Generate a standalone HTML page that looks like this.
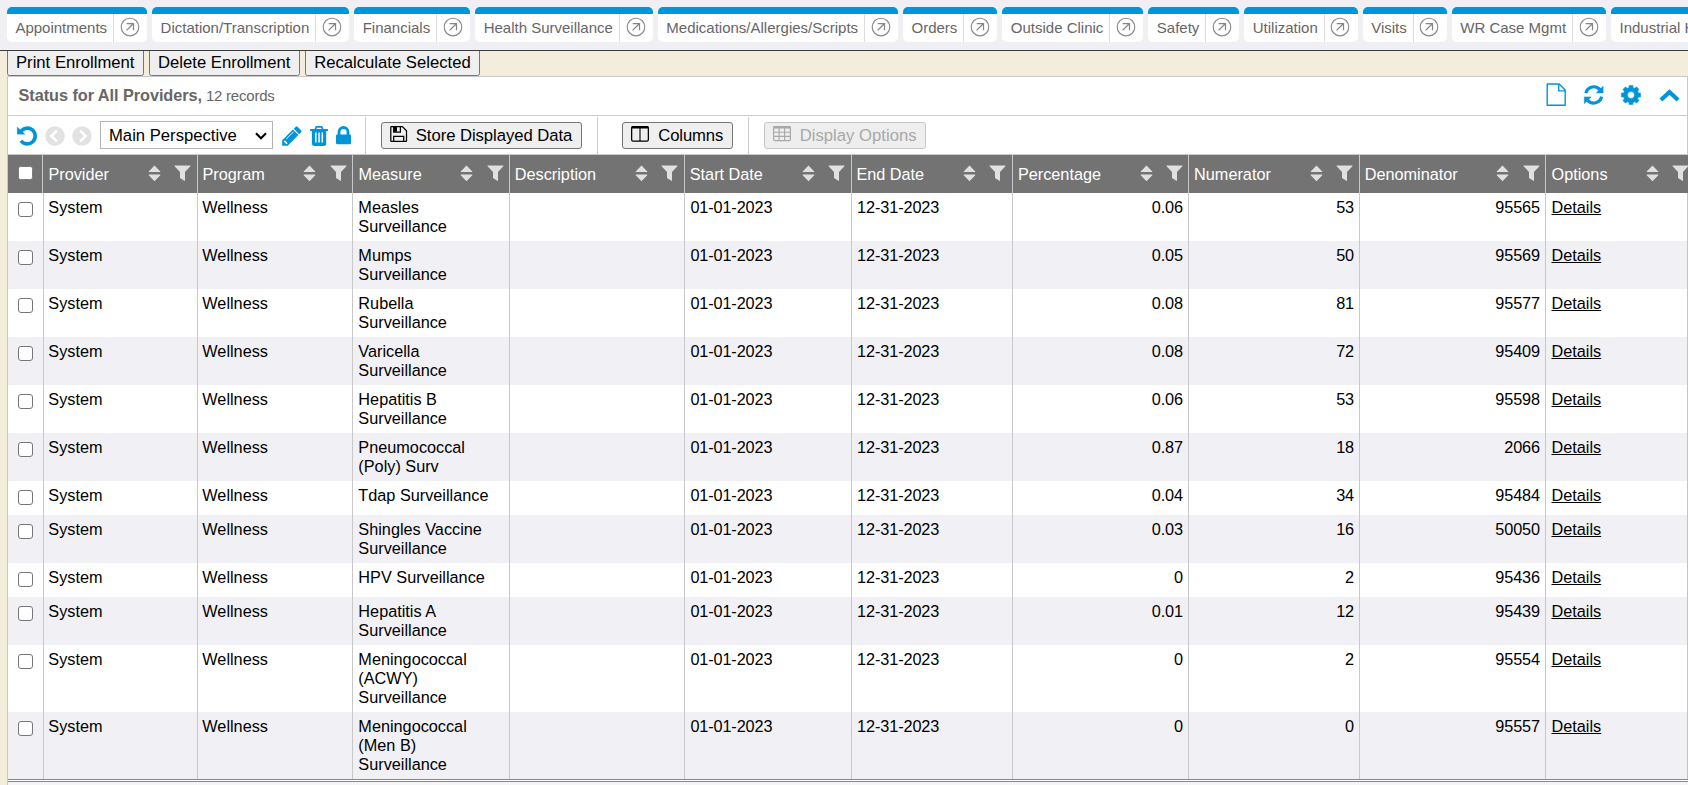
<!DOCTYPE html><html lang="en"><head><meta charset="utf-8"><title>Health Surveillance</title><style>
*{box-sizing:border-box}
html,body{margin:0;padding:0}
body{width:1688px;height:785px;overflow:hidden;background:#f5eddc;font-family:"Liberation Sans",Arial,sans-serif;font-size:16.25px;color:#000;position:relative}
svg{display:block;overflow:visible}
#tabs{z-index:2;position:absolute;left:0;top:0;width:1688px;height:51px;background:#efeff4;border-bottom:1px solid #3c3c3c;overflow:hidden;display:flex;gap:5.06px;padding:7px 0 0 7px;flex-wrap:nowrap}
.tab{flex:none;position:relative;height:35px;background:#fff;border-top:7px solid #0095da;border-radius:5px;font-size:15px;color:#666;white-space:nowrap;padding:0 40px 0 8.4px;line-height:27px}
.tab .sep{position:absolute;right:33px;top:0;width:1px;height:28px;background:#ddd}
.tab .go{position:absolute;right:7.4px;top:3.45px}
#btnbar{position:absolute;left:0;top:51px;width:1688px;height:26px;background:#f5eddc}
.btn{position:absolute;display:block;margin:0;border:1px solid #767676;border-radius:3px;background:#efefef;font-family:inherit;font-size:16.67px;color:#000;white-space:nowrap;padding:0;text-align:left}
.btn span{position:absolute;white-space:nowrap}
.btn svg{position:absolute}
.btn.dis{border-color:#c6c6c6;color:#a8a8a8;background:#eeeeee}
#panel{position:absolute;left:7px;top:76px;width:1681px;height:709px;background:#fff;border-left:1px solid #c8c8c8;border-top:1px solid #c8c8c8;border-right:1px solid #c8c8c8}
#title{position:absolute;left:0;top:0;width:100%;height:39px;border-bottom:1px solid #ccc}
#title .h{position:absolute;left:10.5px;letter-spacing:-0.04px;top:8px;font-weight:bold;color:#666;font-size:16.25px;line-height:20px;white-space:nowrap}
#title .h span{font-weight:normal;font-size:15px;letter-spacing:-0.22px;margin-left:-0.6px}
.ic{position:absolute}
.vsep{position:absolute;top:117px;width:1px;height:38px;background:#ccc}
#sel{-webkit-appearance:none;appearance:none;margin:0;outline:0;font-family:inherit;color:#000;position:absolute;left:100px;top:121px;width:173px;height:28px;border:1px solid #b4b4b4;border-radius:0;background:#fff;font-size:16.67px;line-height:26px;padding:1.1px 0 0 8px;white-space:nowrap}
#sel svg{position:absolute;right:4.9px;top:10.2px}
#hline{position:absolute;left:8px;top:154px;width:1680px;height:1px;background:#c8c8c8}
table{position:absolute;left:8px;top:155px;border-collapse:separate;border-spacing:0;table-layout:fixed;width:1688px}
th{height:38px;background:#737373;color:#fff;font-weight:normal;text-align:left;padding:0 0 0 4.4px;line-height:19px;border-left:1px solid #c8c8c8;position:relative;white-space:nowrap;font-size:16.25px}
td{vertical-align:top;padding:5px 5px 0 4.3px;line-height:19px;border-left:1px solid #c8c8c8;font-size:16.25px;white-space:nowrap}
td.n{text-align:right;letter-spacing:-0.1px}
td.m{padding-left:5.37px}
td.d1{padding-left:5.4px;letter-spacing:-0.12px}
td.d2{padding-left:5.1px;letter-spacing:-0.1px}
td.op{padding-left:5.5px}
td.c,th.c{padding:0;border-left:0}
tr.e td{background:#f0f0f5}
tr.o td{background:#fff}
.sort{position:absolute;right:36px;top:10px}
.filt{position:absolute;right:6px;top:9.8px}
a{color:#000;text-decoration:underline}
.cb{-webkit-appearance:none;appearance:none;margin:0;padding:0;display:block;position:absolute;width:15px;height:15px;border:1.5px solid #767676;border-radius:3px;background:#fff}
#foot{position:absolute;left:8px;top:779px;width:1680px;height:6px;background:#f5f5f7;border-top:1px solid #888}
#foot:before{content:"";position:absolute;left:0;top:0;width:100%;height:1px;background:#fff;border-bottom:1px solid #888}
#redge{position:absolute;left:1687px;top:193px;width:1px;height:586px;background:#c4c4c4;z-index:3}
</style></head><body>
<div id="tabs">
<div class="tab">Appointments<span class="sep"></span><svg class="go" width="20" height="20" viewBox="0 0 20 20"><circle cx="10" cy="10" r="8.8" fill="none" stroke="#8a8a8a" stroke-width="1.15"/><path d="M6.6 13.4 L13.5 6.5 M6.7 6.5 H13.5 V13.3" fill="none" stroke="#858585" stroke-width="1.25"/></svg></div>
<div class="tab">Dictation/Transcription<span class="sep"></span><svg class="go" width="20" height="20" viewBox="0 0 20 20"><circle cx="10" cy="10" r="8.8" fill="none" stroke="#8a8a8a" stroke-width="1.15"/><path d="M6.6 13.4 L13.5 6.5 M6.7 6.5 H13.5 V13.3" fill="none" stroke="#858585" stroke-width="1.25"/></svg></div>
<div class="tab">Financials<span class="sep"></span><svg class="go" width="20" height="20" viewBox="0 0 20 20"><circle cx="10" cy="10" r="8.8" fill="none" stroke="#8a8a8a" stroke-width="1.15"/><path d="M6.6 13.4 L13.5 6.5 M6.7 6.5 H13.5 V13.3" fill="none" stroke="#858585" stroke-width="1.25"/></svg></div>
<div class="tab">Health Surveillance<span class="sep"></span><svg class="go" width="20" height="20" viewBox="0 0 20 20"><circle cx="10" cy="10" r="8.8" fill="none" stroke="#8a8a8a" stroke-width="1.15"/><path d="M6.6 13.4 L13.5 6.5 M6.7 6.5 H13.5 V13.3" fill="none" stroke="#858585" stroke-width="1.25"/></svg></div>
<div class="tab">Medications/Allergies/Scripts<span class="sep"></span><svg class="go" width="20" height="20" viewBox="0 0 20 20"><circle cx="10" cy="10" r="8.8" fill="none" stroke="#8a8a8a" stroke-width="1.15"/><path d="M6.6 13.4 L13.5 6.5 M6.7 6.5 H13.5 V13.3" fill="none" stroke="#858585" stroke-width="1.25"/></svg></div>
<div class="tab">Orders<span class="sep"></span><svg class="go" width="20" height="20" viewBox="0 0 20 20"><circle cx="10" cy="10" r="8.8" fill="none" stroke="#8a8a8a" stroke-width="1.15"/><path d="M6.6 13.4 L13.5 6.5 M6.7 6.5 H13.5 V13.3" fill="none" stroke="#858585" stroke-width="1.25"/></svg></div>
<div class="tab">Outside Clinic<span class="sep"></span><svg class="go" width="20" height="20" viewBox="0 0 20 20"><circle cx="10" cy="10" r="8.8" fill="none" stroke="#8a8a8a" stroke-width="1.15"/><path d="M6.6 13.4 L13.5 6.5 M6.7 6.5 H13.5 V13.3" fill="none" stroke="#858585" stroke-width="1.25"/></svg></div>
<div class="tab">Safety<span class="sep"></span><svg class="go" width="20" height="20" viewBox="0 0 20 20"><circle cx="10" cy="10" r="8.8" fill="none" stroke="#8a8a8a" stroke-width="1.15"/><path d="M6.6 13.4 L13.5 6.5 M6.7 6.5 H13.5 V13.3" fill="none" stroke="#858585" stroke-width="1.25"/></svg></div>
<div class="tab">Utilization<span class="sep"></span><svg class="go" width="20" height="20" viewBox="0 0 20 20"><circle cx="10" cy="10" r="8.8" fill="none" stroke="#8a8a8a" stroke-width="1.15"/><path d="M6.6 13.4 L13.5 6.5 M6.7 6.5 H13.5 V13.3" fill="none" stroke="#858585" stroke-width="1.25"/></svg></div>
<div class="tab">Visits<span class="sep"></span><svg class="go" width="20" height="20" viewBox="0 0 20 20"><circle cx="10" cy="10" r="8.8" fill="none" stroke="#8a8a8a" stroke-width="1.15"/><path d="M6.6 13.4 L13.5 6.5 M6.7 6.5 H13.5 V13.3" fill="none" stroke="#858585" stroke-width="1.25"/></svg></div>
<div class="tab">WR Case Mgmt<span class="sep"></span><svg class="go" width="20" height="20" viewBox="0 0 20 20"><circle cx="10" cy="10" r="8.8" fill="none" stroke="#8a8a8a" stroke-width="1.15"/><path d="M6.6 13.4 L13.5 6.5 M6.7 6.5 H13.5 V13.3" fill="none" stroke="#858585" stroke-width="1.25"/></svg></div>
<div class="tab">Industrial Hygiene<span class="sep"></span><svg class="go" width="20" height="20" viewBox="0 0 20 20"><circle cx="10" cy="10" r="8.8" fill="none" stroke="#8a8a8a" stroke-width="1.15"/><path d="M6.6 13.4 L13.5 6.5 M6.7 6.5 H13.5 V13.3" fill="none" stroke="#858585" stroke-width="1.25"/></svg></div>
</div>
<div id="btnbar">
<button class="btn" style="left:7px;top:-4px;width:137px;height:29px;border-radius:2.5px"><span style="left:8px;top:3.8px;line-height:21px">Print Enrollment</span></button>
<button class="btn" style="left:149px;top:-4px;width:151px;height:29px;border-radius:2.5px"><span style="left:8px;top:3.8px;line-height:21px">Delete Enrollment</span></button>
<button class="btn" style="left:305px;top:-4px;width:175px;height:29px;border-radius:2.5px"><span style="left:8.2px;top:3.8px;line-height:21px">Recalculate Selected</span></button>
</div>
<div id="panel"><div id="title"><div class="h">Status for All Providers, <span>12 records</span></div></div></div>
<div class="ic" style="left:1546px;top:83px"><svg width="21" height="24" viewBox="0 0 21 24"><path d="M1.2 1 H13.1 L19.2 7.1 V22.2 H1.2 Z" fill="none" stroke="#0095da" stroke-width="1.4" stroke-linejoin="round"/><path d="M12.7 1.2 V7.9 H19" fill="none" stroke="#0095da" stroke-width="1.4"/></svg></div>
<div class="ic" style="left:1583.5px;top:84.9px"><svg width="20" height="20" viewBox="0 0 20 20"><path d="M1.86 8.08 A8.1 8.1 0 0 1 16.13 4.91" fill="none" stroke="#0095da" stroke-width="3.2"/><path d="M17.64 11.72 A8.1 8.1 0 0 1 3.37 14.89" fill="none" stroke="#0095da" stroke-width="3.2"/><path d="M19.1 1.2 V7.9 H12.2 Z M0.3 18.6 V11.9 H7.2 Z" fill="#0095da" stroke="#0095da" stroke-width="0.5" stroke-linejoin="round"/></svg></div>
<div class="ic" style="left:1621.1px;top:84.9px"><svg width="20" height="20" viewBox="0 0 20 20"><path d="M8.07 2.55 L8.05 0.40 L11.95 0.40 L11.93 2.55 L13.91 3.37 L15.41 1.83 L18.17 4.59 L16.63 6.09 L17.45 8.07 L19.60 8.05 L19.60 11.95 L17.45 11.93 L16.63 13.91 L18.17 15.41 L15.41 18.17 L13.91 16.63 L11.93 17.45 L11.95 19.60 L8.05 19.60 L8.07 17.45 L6.09 16.63 L4.59 18.17 L1.83 15.41 L3.37 13.91 L2.55 11.93 L0.40 11.95 L0.40 8.05 L2.55 8.07 L3.37 6.09 L1.83 4.59 L4.59 1.83 L6.09 3.37 Z M13.4 10 A3.4 3.4 0 1 0 6.6 10 A3.4 3.4 0 1 0 13.4 10 Z" fill="#0095da" fill-rule="evenodd" stroke="#0095da" stroke-width="0.5" stroke-linejoin="round"/></svg></div>
<div class="ic" style="left:1658.7px;top:88.6px"><svg width="21" height="13" viewBox="0 0 21 13"><path d="M1.9 11.1 L10.5 2.95 L19.1 11.1" fill="none" stroke="#0095da" stroke-width="4.1"/></svg></div>
<div class="ic" style="left:17.4px;top:125.9px"><svg width="20" height="20" viewBox="0 0 20 20"><path d="M3.67 5.70 A7.9 7.9 0 1 1 3.99 14.75" fill="none" stroke="#0095da" stroke-width="3.6"/><path d="M0.4 1.3 L0.4 8.1 L7.6 8.1 Z" fill="#0095da" stroke="#0095da" stroke-width="0.7" stroke-linejoin="round"/></svg></div>
<div class="ic" style="left:44.7px;top:125.9px"><svg width="20" height="20" viewBox="0 0 20 20"><circle cx="10" cy="10" r="9.75" fill="#e2e2e2"/><path d="M11.9 4.6 L6.4 10 L11.9 15.4" fill="none" stroke="#fff" stroke-width="2.6"/></svg></div>
<div class="ic" style="left:72.4px;top:125.9px"><svg width="20" height="20" viewBox="0 0 20 20"><circle cx="10" cy="10" r="9.75" fill="#e2e2e2"/><path d="M8.1 4.6 L13.6 10 L8.1 15.4" fill="none" stroke="#fff" stroke-width="2.6"/></svg></div>
<select id="sel"><option>Main Perspective</option></select><div class="ic" style="left:255.1px;top:132.2px"><svg width="12" height="8" viewBox="0 0 12 8"><path d="M1 1.2 L6 6.3 L11 1.2" fill="none" stroke="#000" stroke-width="2.1"/></svg></div>
<div class="ic" style="left:281.8px;top:125.9px"><svg width="20" height="20" viewBox="0 0 20 20"><path d="M0.2 14.3 L10.9 3.6 L16.4 9.1 L5.7 19.8 H0.2 Z" fill="#0095da"/><path d="M11.75 2.75 L13.85 0.65 Q14.65 -0.05 15.45 0.65 L19.25 4.45 Q19.95 5.25 19.25 6.05 L17.15 8.15 Z" fill="#0095da"/><path d="M4.3 13 L11.4 5.9" stroke="#fff" stroke-width="0.9" fill="none"/><path d="M2.3 14.9 L5.1 17.7" stroke="#fff" stroke-width="1.6" fill="none"/></svg></div>
<div class="ic" style="left:309.85px;top:125.9px"><svg width="18" height="20" viewBox="0 0 18 20"><path d="M5 4 L6.3 0.9 H11.7 L13 4" fill="none" stroke="#0095da" stroke-width="1.7" stroke-linejoin="round"/><rect x="0" y="3.1" width="18" height="1.9" rx="0.5" fill="#0095da"/><path d="M1.9 4.8 H16.2 V17.8 Q16.2 19.9 14.2 19.9 H3.9 Q1.9 19.9 1.9 17.8 Z" fill="#0095da"/><path d="M5.8 6.6 V16.6 M9.05 6.6 V16.6 M12.3 6.6 V16.6" stroke="#fff" stroke-width="1.5" fill="none"/></svg></div>
<div class="ic" style="left:335.9px;top:125.7px"><svg width="15" height="19" viewBox="0 0 15 19"><rect x="0" y="8.4" width="15" height="9.8" rx="1.1" fill="#0095da"/><path d="M3 9 V6 A4.5 4.5 0 0 1 12 6 V9" fill="none" stroke="#0095da" stroke-width="2.8"/></svg></div>
<div class="vsep" style="left:365px"></div>
<div class="vsep" style="left:597px"></div>
<div class="vsep" style="left:748px"></div>
<button class="btn " style="left:381px;top:122px;width:201px;height:27px"><span style="left:33.80px;top:2px;line-height:21px;letter-spacing:-0.05px">Store Displayed Data</span><div class="ic" style="left:8.199999999999989px;top:3.2px"><svg width="17" height="17" viewBox="0 0 17 17"><path d="M0.8 1.2 Q0.8 0.6 1.4 0.6 H12.4 L16.5 4.7 V14.8 Q16.5 15.4 15.9 15.4 H1.4 Q0.8 15.4 0.8 14.8 Z" fill="none" stroke="#000" stroke-width="1.25"/><path d="M3.7 0.6 V6.1 H10.4 V0.6" fill="none" stroke="#000" stroke-width="1.2"/><rect x="3.7" y="0.6" width="3.3" height="5.2" fill="#000"/><path d="M3.7 15.4 V10.3 H13.7 V15.4" fill="none" stroke="#000" stroke-width="1.25"/></svg></div></button>
<button class="btn " style="left:622px;top:122px;width:111px;height:27px"><span style="left:35.30px;top:2px;line-height:21px;letter-spacing:-0.13px">Columns</span><div class="ic" style="left:8px;top:3.2px"><svg width="18" height="17" viewBox="0 0 18 17"><rect x="0.65" y="0.65" width="16.7" height="14.5" rx="1.3" fill="none" stroke="#000" stroke-width="1.25"/><rect x="0.6" y="0.3" width="16.8" height="2.3" rx="0.8" fill="#000"/><path d="M9 1 V15.3" stroke="#000" stroke-width="1.1"/></svg></div></button>
<button class="btn dis" style="left:764px;top:122px;width:162px;height:27px"><span style="left:34.70px;top:2px;line-height:21px;letter-spacing:0.02px">Display Options</span><div class="ic" style="left:8.100000000000023px;top:3.2px"><svg width="18" height="16" viewBox="0 0 18 16"><rect x="0.6" y="0.6" width="16.8" height="14" rx="1.3" fill="none" stroke="#a8a8a8" stroke-width="1.2"/><rect x="0.3" y="0.2" width="17.4" height="2.3" rx="0.8" fill="#a8a8a8"/><path d="M6.1 2 V15 M11.6 2 V15 M0.6 6.3 H17.4 M0.6 10.4 H17.4" stroke="#a8a8a8" stroke-width="1.1" fill="none"/></svg></div></button>
<table><colgroup>
<col style="width:35px">
<col style="width:154px">
<col style="width:155px">
<col style="width:157px">
<col style="width:175px">
<col style="width:167px">
<col style="width:161px">
<col style="width:176px">
<col style="width:171px">
<col style="width:186px">
<col style="width:151px">
</colgroup><thead><tr>
<th class="c"><input type="checkbox" class="cb" style="left:10px;top:10.6px;height:14.3px;border-radius:2.5px;border-color:#7d7d7d"><span style="position:absolute;right:0;top:0;width:1px;height:38px;background:#c8c8c8"></span></th>
<th style="padding-left:4.40px;border-left-color:#737373">Provider<div class="sort" style="right:36.45px"><svg width="13" height="17" viewBox="0 0 13 17"><path d="M6.5 0.5 L12.3 6.5 Q12.6 7.1 12 7.1 H1 Q0.4 7.1 0.7 6.5 Z M6.5 16.2 L0.7 10.3 Q0.4 9.5 1 9.5 H12 Q12.6 9.5 12.3 10.3 Z" fill="#e0e0e0"/></svg></div><div class="filt" style="right:6.30px"><svg width="17" height="17" viewBox="0 0 17 17"><path d="M0.8 0.4 H16.2 Q16.8 0.6 16.4 1.2 L11 6.9 V15.6 Q10.8 16.1 10.3 15.8 L6 12.9 V6.9 L0.6 1.2 Q0.2 0.6 0.8 0.4 Z" fill="#e0e0e0"/></svg></div></th>
<th style="padding-left:4.40px">Program<div class="sort" style="right:35.70px"><svg width="13" height="17" viewBox="0 0 13 17"><path d="M6.5 0.5 L12.3 6.5 Q12.6 7.1 12 7.1 H1 Q0.4 7.1 0.7 6.5 Z M6.5 16.2 L0.7 10.3 Q0.4 9.5 1 9.5 H12 Q12.6 9.5 12.3 10.3 Z" fill="#e0e0e0"/></svg></div><div class="filt" style="right:5.30px"><svg width="17" height="17" viewBox="0 0 17 17"><path d="M0.8 0.4 H16.2 Q16.8 0.6 16.4 1.2 L11 6.9 V15.6 Q10.8 16.1 10.3 15.8 L6 12.9 V6.9 L0.6 1.2 Q0.2 0.6 0.8 0.4 Z" fill="#e0e0e0"/></svg></div></th>
<th style="padding-left:5.47px">Measure<div class="sort" style="right:35.85px"><svg width="13" height="17" viewBox="0 0 13 17"><path d="M6.5 0.5 L12.3 6.5 Q12.6 7.1 12 7.1 H1 Q0.4 7.1 0.7 6.5 Z M6.5 16.2 L0.7 10.3 Q0.4 9.5 1 9.5 H12 Q12.6 9.5 12.3 10.3 Z" fill="#e0e0e0"/></svg></div><div class="filt" style="right:5.50px"><svg width="17" height="17" viewBox="0 0 17 17"><path d="M0.8 0.4 H16.2 Q16.8 0.6 16.4 1.2 L11 6.9 V15.6 Q10.8 16.1 10.3 15.8 L6 12.9 V6.9 L0.6 1.2 Q0.2 0.6 0.8 0.4 Z" fill="#e0e0e0"/></svg></div></th>
<th style="padding-left:4.83px">Description<div class="sort" style="right:35.95px"><svg width="13" height="17" viewBox="0 0 13 17"><path d="M6.5 0.5 L12.3 6.5 Q12.6 7.1 12 7.1 H1 Q0.4 7.1 0.7 6.5 Z M6.5 16.2 L0.7 10.3 Q0.4 9.5 1 9.5 H12 Q12.6 9.5 12.3 10.3 Z" fill="#e0e0e0"/></svg></div><div class="filt" style="right:5.80px"><svg width="17" height="17" viewBox="0 0 17 17"><path d="M0.8 0.4 H16.2 Q16.8 0.6 16.4 1.2 L11 6.9 V15.6 Q10.8 16.1 10.3 15.8 L6 12.9 V6.9 L0.6 1.2 Q0.2 0.6 0.8 0.4 Z" fill="#e0e0e0"/></svg></div></th>
<th style="padding-left:4.75px">Start Date<div class="sort" style="right:36.45px"><svg width="13" height="17" viewBox="0 0 13 17"><path d="M6.5 0.5 L12.3 6.5 Q12.6 7.1 12 7.1 H1 Q0.4 7.1 0.7 6.5 Z M6.5 16.2 L0.7 10.3 Q0.4 9.5 1 9.5 H12 Q12.6 9.5 12.3 10.3 Z" fill="#e0e0e0"/></svg></div><div class="filt" style="right:5.90px"><svg width="17" height="17" viewBox="0 0 17 17"><path d="M0.8 0.4 H16.2 Q16.8 0.6 16.4 1.2 L11 6.9 V15.6 Q10.8 16.1 10.3 15.8 L6 12.9 V6.9 L0.6 1.2 Q0.2 0.6 0.8 0.4 Z" fill="#e0e0e0"/></svg></div></th>
<th style="padding-left:4.40px">End Date<div class="sort" style="right:35.95px"><svg width="13" height="17" viewBox="0 0 13 17"><path d="M6.5 0.5 L12.3 6.5 Q12.6 7.1 12 7.1 H1 Q0.4 7.1 0.7 6.5 Z M6.5 16.2 L0.7 10.3 Q0.4 9.5 1 9.5 H12 Q12.6 9.5 12.3 10.3 Z" fill="#e0e0e0"/></svg></div><div class="filt" style="right:5.80px"><svg width="17" height="17" viewBox="0 0 17 17"><path d="M0.8 0.4 H16.2 Q16.8 0.6 16.4 1.2 L11 6.9 V15.6 Q10.8 16.1 10.3 15.8 L6 12.9 V6.9 L0.6 1.2 Q0.2 0.6 0.8 0.4 Z" fill="#e0e0e0"/></svg></div></th>
<th style="padding-left:4.90px">Percentage<div class="sort" style="right:35.45px"><svg width="13" height="17" viewBox="0 0 13 17"><path d="M6.5 0.5 L12.3 6.5 Q12.6 7.1 12 7.1 H1 Q0.4 7.1 0.7 6.5 Z M6.5 16.2 L0.7 10.3 Q0.4 9.5 1 9.5 H12 Q12.6 9.5 12.3 10.3 Z" fill="#e0e0e0"/></svg></div><div class="filt" style="right:5.20px"><svg width="17" height="17" viewBox="0 0 17 17"><path d="M0.8 0.4 H16.2 Q16.8 0.6 16.4 1.2 L11 6.9 V15.6 Q10.8 16.1 10.3 15.8 L6 12.9 V6.9 L0.6 1.2 Q0.2 0.6 0.8 0.4 Z" fill="#e0e0e0"/></svg></div></th>
<th style="padding-left:5.10px">Numerator<div class="sort" style="right:35.95px"><svg width="13" height="17" viewBox="0 0 13 17"><path d="M6.5 0.5 L12.3 6.5 Q12.6 7.1 12 7.1 H1 Q0.4 7.1 0.7 6.5 Z M6.5 16.2 L0.7 10.3 Q0.4 9.5 1 9.5 H12 Q12.6 9.5 12.3 10.3 Z" fill="#e0e0e0"/></svg></div><div class="filt" style="right:5.80px"><svg width="17" height="17" viewBox="0 0 17 17"><path d="M0.8 0.4 H16.2 Q16.8 0.6 16.4 1.2 L11 6.9 V15.6 Q10.8 16.1 10.3 15.8 L6 12.9 V6.9 L0.6 1.2 Q0.2 0.6 0.8 0.4 Z" fill="#e0e0e0"/></svg></div></th>
<th style="padding-left:4.70px">Denominator<div class="sort" style="right:35.70px"><svg width="13" height="17" viewBox="0 0 13 17"><path d="M6.5 0.5 L12.3 6.5 Q12.6 7.1 12 7.1 H1 Q0.4 7.1 0.7 6.5 Z M6.5 16.2 L0.7 10.3 Q0.4 9.5 1 9.5 H12 Q12.6 9.5 12.3 10.3 Z" fill="#e0e0e0"/></svg></div><div class="filt" style="right:5.30px"><svg width="17" height="17" viewBox="0 0 17 17"><path d="M0.8 0.4 H16.2 Q16.8 0.6 16.4 1.2 L11 6.9 V15.6 Q10.8 16.1 10.3 15.8 L6 12.9 V6.9 L0.6 1.2 Q0.2 0.6 0.8 0.4 Z" fill="#e0e0e0"/></svg></div></th>
<th style="padding-left:5.50px">Options<div class="sort" style="right:36.85px"><svg width="13" height="17" viewBox="0 0 13 17"><path d="M6.5 0.5 L12.3 6.5 Q12.6 7.1 12 7.1 H1 Q0.4 7.1 0.7 6.5 Z M6.5 16.2 L0.7 10.3 Q0.4 9.5 1 9.5 H12 Q12.6 9.5 12.3 10.3 Z" fill="#e0e0e0"/></svg></div><div class="filt" style="right:6.90px"><svg width="17" height="17" viewBox="0 0 17 17"><path d="M0.8 0.4 H16.2 Q16.8 0.6 16.4 1.2 L11 6.9 V15.6 Q10.8 16.1 10.3 15.8 L6 12.9 V6.9 L0.6 1.2 Q0.2 0.6 0.8 0.4 Z" fill="#e0e0e0"/></svg></div></th>
</tr></thead><tbody>
<tr class="o" style="height:48px"><td class="c" style="position:relative"><input type="checkbox" class="cb" style="left:10px;top:9px"></td><td>System</td><td>Wellness</td><td class="m">Measles<br>Surveillance</td><td></td><td class="d1">01-01-2023</td><td class="d2">12-31-2023</td><td class="n">0.06</td><td class="n">53</td><td class="n">95565</td><td class="op"><a>Details</a></td></tr>
<tr class="e" style="height:48px"><td class="c" style="position:relative"><input type="checkbox" class="cb" style="left:10px;top:9px"></td><td>System</td><td>Wellness</td><td class="m">Mumps<br>Surveillance</td><td></td><td class="d1">01-01-2023</td><td class="d2">12-31-2023</td><td class="n">0.05</td><td class="n">50</td><td class="n">95569</td><td class="op"><a>Details</a></td></tr>
<tr class="o" style="height:48px"><td class="c" style="position:relative"><input type="checkbox" class="cb" style="left:10px;top:9px"></td><td>System</td><td>Wellness</td><td class="m">Rubella<br>Surveillance</td><td></td><td class="d1">01-01-2023</td><td class="d2">12-31-2023</td><td class="n">0.08</td><td class="n">81</td><td class="n">95577</td><td class="op"><a>Details</a></td></tr>
<tr class="e" style="height:48px"><td class="c" style="position:relative"><input type="checkbox" class="cb" style="left:10px;top:9px"></td><td>System</td><td>Wellness</td><td class="m">Varicella<br>Surveillance</td><td></td><td class="d1">01-01-2023</td><td class="d2">12-31-2023</td><td class="n">0.08</td><td class="n">72</td><td class="n">95409</td><td class="op"><a>Details</a></td></tr>
<tr class="o" style="height:48px"><td class="c" style="position:relative"><input type="checkbox" class="cb" style="left:10px;top:9px"></td><td>System</td><td>Wellness</td><td class="m">Hepatitis B<br>Surveillance</td><td></td><td class="d1">01-01-2023</td><td class="d2">12-31-2023</td><td class="n">0.06</td><td class="n">53</td><td class="n">95598</td><td class="op"><a>Details</a></td></tr>
<tr class="e" style="height:48px"><td class="c" style="position:relative"><input type="checkbox" class="cb" style="left:10px;top:9px"></td><td>System</td><td>Wellness</td><td class="m">Pneumococcal<br>(Poly) Surv</td><td></td><td class="d1">01-01-2023</td><td class="d2">12-31-2023</td><td class="n">0.87</td><td class="n">18</td><td class="n">2066</td><td class="op"><a>Details</a></td></tr>
<tr class="o" style="height:34px"><td class="c" style="position:relative"><input type="checkbox" class="cb" style="left:10px;top:9px"></td><td>System</td><td>Wellness</td><td class="m">Tdap Surveillance</td><td></td><td class="d1">01-01-2023</td><td class="d2">12-31-2023</td><td class="n">0.04</td><td class="n">34</td><td class="n">95484</td><td class="op"><a>Details</a></td></tr>
<tr class="e" style="height:48px"><td class="c" style="position:relative"><input type="checkbox" class="cb" style="left:10px;top:9px"></td><td>System</td><td>Wellness</td><td class="m">Shingles Vaccine<br>Surveillance</td><td></td><td class="d1">01-01-2023</td><td class="d2">12-31-2023</td><td class="n">0.03</td><td class="n">16</td><td class="n">50050</td><td class="op"><a>Details</a></td></tr>
<tr class="o" style="height:34px"><td class="c" style="position:relative"><input type="checkbox" class="cb" style="left:10px;top:9px"></td><td>System</td><td>Wellness</td><td class="m">HPV Surveillance</td><td></td><td class="d1">01-01-2023</td><td class="d2">12-31-2023</td><td class="n">0</td><td class="n">2</td><td class="n">95436</td><td class="op"><a>Details</a></td></tr>
<tr class="e" style="height:48px"><td class="c" style="position:relative"><input type="checkbox" class="cb" style="left:10px;top:9px"></td><td>System</td><td>Wellness</td><td class="m">Hepatitis A<br>Surveillance</td><td></td><td class="d1">01-01-2023</td><td class="d2">12-31-2023</td><td class="n">0.01</td><td class="n">12</td><td class="n">95439</td><td class="op"><a>Details</a></td></tr>
<tr class="o" style="height:67px"><td class="c" style="position:relative"><input type="checkbox" class="cb" style="left:10px;top:9px"></td><td>System</td><td>Wellness</td><td class="m">Meningococcal<br>(ACWY)<br>Surveillance</td><td></td><td class="d1">01-01-2023</td><td class="d2">12-31-2023</td><td class="n">0</td><td class="n">2</td><td class="n">95554</td><td class="op"><a>Details</a></td></tr>
<tr class="e" style="height:67px"><td class="c" style="position:relative"><input type="checkbox" class="cb" style="left:10px;top:9px"></td><td>System</td><td>Wellness</td><td class="m">Meningococcal<br>(Men B)<br>Surveillance</td><td></td><td class="d1">01-01-2023</td><td class="d2">12-31-2023</td><td class="n">0</td><td class="n">0</td><td class="n">95557</td><td class="op"><a>Details</a></td></tr>
</tbody></table>
<div id="hline"></div><div id="redge"></div><div id="foot"></div>
</body></html>
